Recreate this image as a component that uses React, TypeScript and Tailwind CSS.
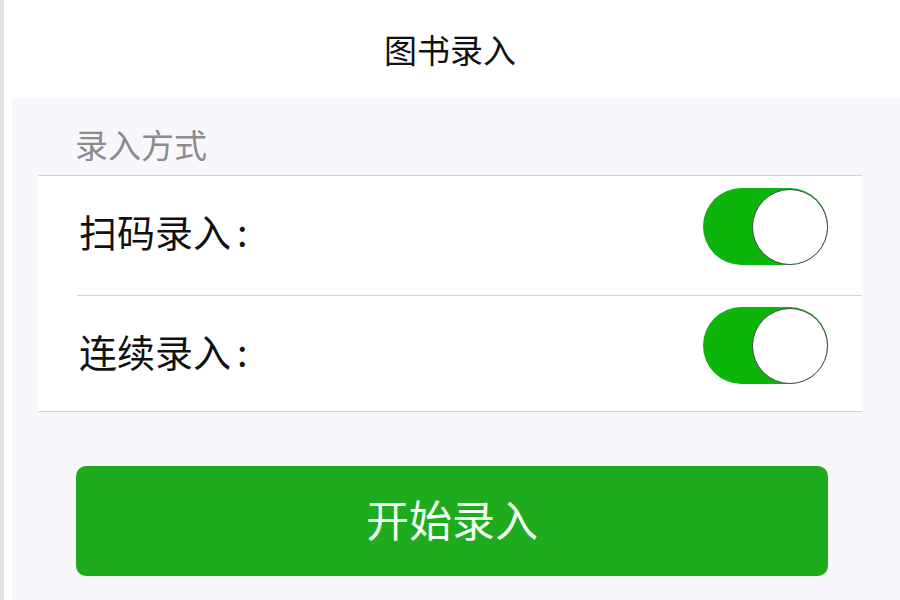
import { useState } from 'react';

interface ToggleProps {
  on: boolean;
  onChange: (v: boolean) => void;
  className?: string;
}

function Toggle({ on, onChange, className = '' }: ToggleProps) {
  return (
    <button
      type="button"
      onClick={() => onChange(!on)}
      className={`flex h-[77px] w-[125px] items-center rounded-full p-0 ${
        on ? 'justify-end bg-[#0cb40c]' : 'justify-start bg-[#e5e5e5]'
      } ${className}`}
    >
      <span className="block h-[76px] w-[76px] rounded-full border border-[#4a4a4a] bg-white" />
    </button>
  );
}

export default function App() {
  const [scan, setScan] = useState(true);
  const [continuous, setContinuous] = useState(true);

  return (
    <div
      className="flex h-[600px] w-[900px] overflow-hidden bg-[#f8f8fc]"
      style={{ fontFamily: '"Noto Sans CJK SC", "Noto Sans", sans-serif' }}
    >
      {/* left edge strip */}
      <div className="w-[4px] bg-[#e2e2e6]" />
      <div className="w-[8px] bg-white" />

      <div className="flex flex-1 flex-col">
        {/* header */}
        <div className="flex h-[98px] items-center justify-center bg-white pr-[12px]">
          <span className="text-[33px] leading-none text-[#111]">图书录入</span>
        </div>

        {/* section label */}
        <div className="pl-[63px] pt-[30px] pb-[14px] text-[33px] leading-none text-[#8c8c8c]">
          录入方式
        </div>

        {/* card */}
        <div className="ml-[26px] mr-[38px] border-y border-[#d2d2d6] bg-white">
          <div className="flex h-[119px] items-center justify-between pl-[41px] pr-[34px]">
            <span className="pb-[9px] text-[38px] leading-none text-[#111]">
              扫码录入<span className="ml-[6px]">:</span>
            </span>
            <Toggle on={scan} onChange={setScan} className="mb-[18px]" />
          </div>
          <div className="ml-[39px] border-t border-[#d2d2d6]" />
          <div className="flex h-[115px] items-center justify-between pl-[41px] pr-[34px]">
            <span className="pb-[5px] text-[38px] leading-none text-[#111]">
              连续录入<span className="ml-[6px]">:</span>
            </span>
            <Toggle on={continuous} onChange={setContinuous} className="mb-[16px]" />
          </div>
        </div>

        {/* start button */}
        <div className="pl-[64px] pr-[72px] pt-[54px]">
          <button
            type="button"
            className="flex h-[110px] w-full items-center justify-center rounded-[10px] bg-[#1eab1e] pb-[6px] text-[43px] leading-none text-[#f2fff2]"
          >
            开始录入
          </button>
        </div>
      </div>
    </div>
  );
}
